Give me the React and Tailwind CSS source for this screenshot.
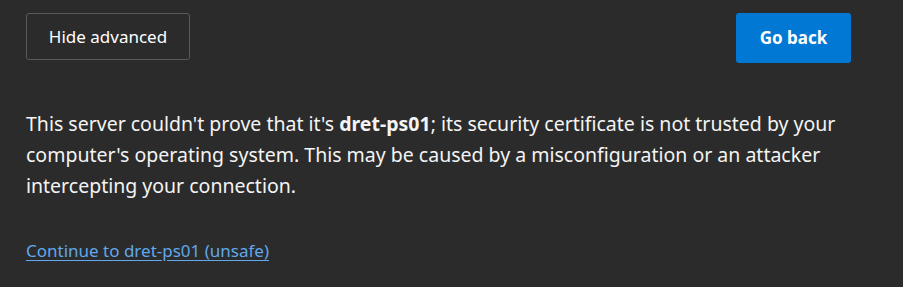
import React from 'react';

export default function App() {
    return (
        <div className="w-[903px] h-[287px] bg-[#2b2b2b] text-white pl-[26px] pr-[26px] pt-[13px] overflow-hidden" style={{ fontFamily: '"Noto Sans", "Open Sans", sans-serif' }}>
            <div className="flex justify-between items-start pr-[26px]">
                <button className="h-[47px] w-[164px] border border-[#5a5a5a] rounded-[3px] bg-[#2b2b2b] text-[17px] text-white">
                    Hide advanced
                </button>
                <button className="h-[50px] w-[115px] rounded-[3px] bg-[#0078d4] text-[17px] font-bold text-white">
                    Go back
                </button>
            </div>
            <p className="mt-[45px] w-[845px] text-[19.5px] leading-[31px] text-[#f4f4f4]">
                This server couldn't prove that it's <b>dret-ps01</b>; its security certificate is not trusted by your computer's operating system. This may be caused by a misconfiguration or an attacker intercepting your connection.
            </p>
            <a href="#" className="inline-block mt-[37px] text-[17px] leading-[25px] text-[#61a8ec] underline underline-offset-[3px]">
                Continue to dret-ps01 (unsafe)
            </a>
        </div>
    );
}
